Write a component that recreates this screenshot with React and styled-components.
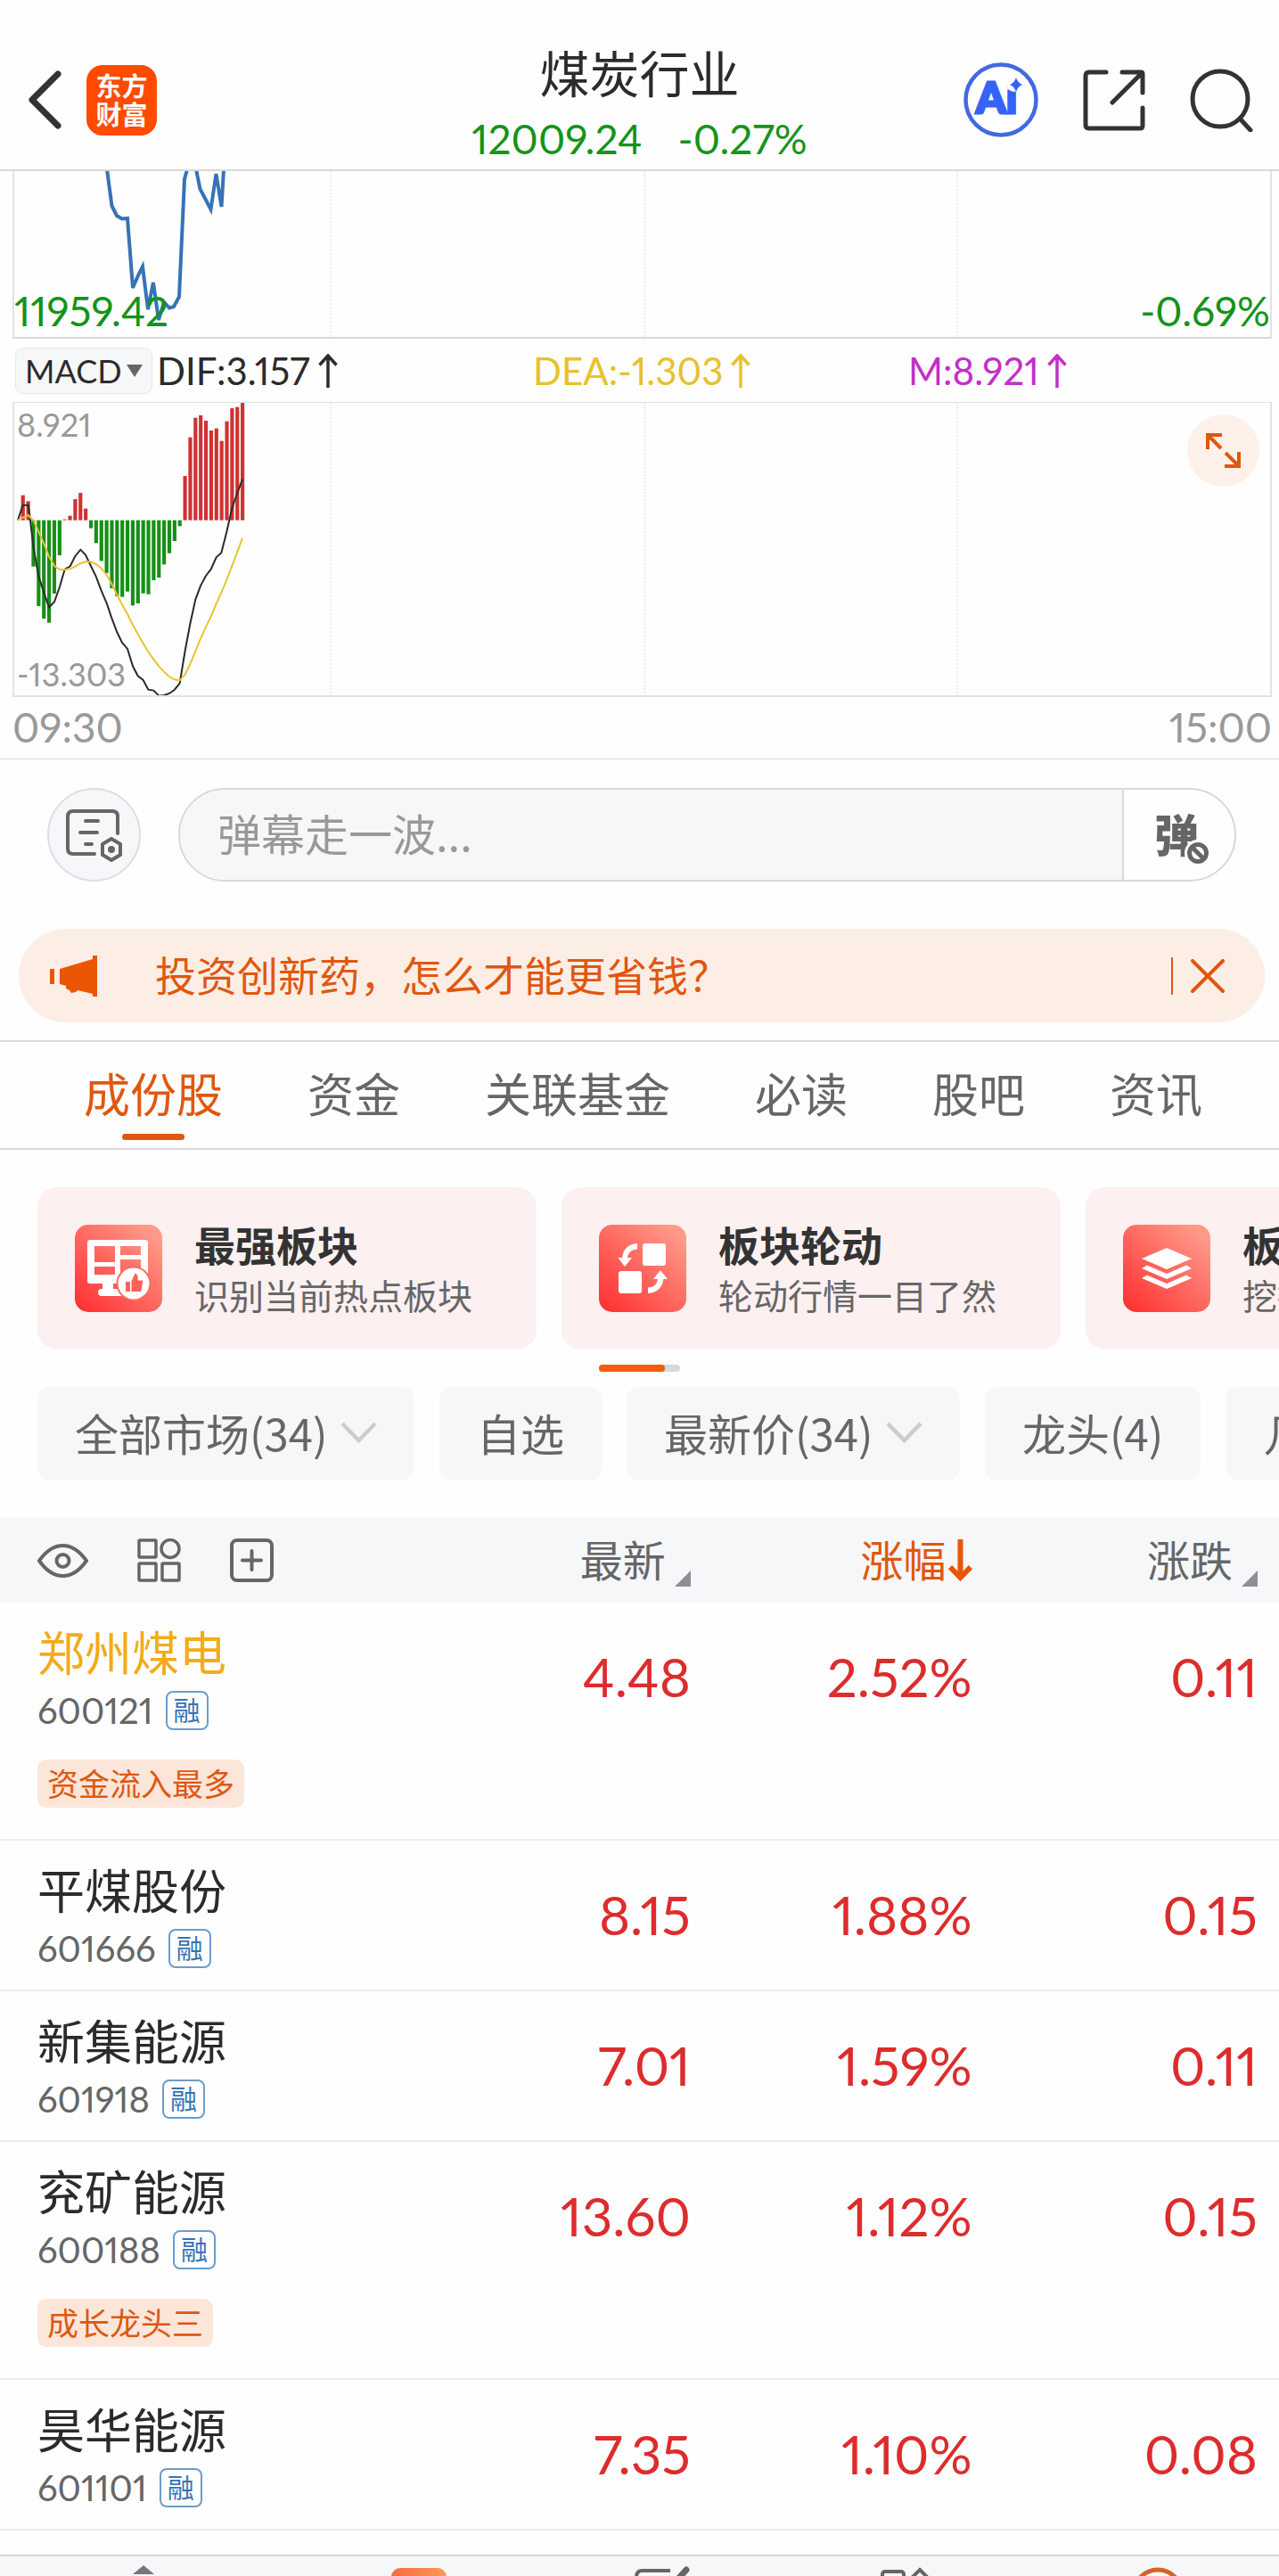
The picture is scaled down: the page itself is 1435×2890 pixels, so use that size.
import React from "react";
import styled, { createGlobalStyle } from "styled-components";

const cjk = '"Noto Sans CJK SC", sans-serif';
const sans = `Lato, ${cjk}`;

const c = {
  ink: "#2b2b2b",
  gray: "#666666",
  light: "#999999",
  line: "#d6d8db",
  rowLine: "#ececef",
  panel: "#f6f7f9",
  green: "#15931a",
  red: "#dd2c2c",
  orange: "#e0570f",
  blue: "#3673b5",
  yellow: "#e8c12c",
  purple: "#c22fc8",
};

const Global = createGlobalStyle`
  *, *::before, *::after { box-sizing: border-box; }
  body { margin: 0; background: #fefefe; }
  button, input, select { font: inherit; color: inherit; border: 0; background: none; padding: 0; margin: 0; }
  select { appearance: none; outline: 0; }
  svg { display: block; }
`;

const Screen = styled.div`
  height: 100vh;
  overflow: hidden;
  font-family: ${sans};
  color: ${c.ink};
`;

/* Header */
const Header = styled.header`
  display: grid;
  grid-template-columns: 1fr auto 1fr;
  padding: 47px 28px 6px;
  height: 192px;
  border-bottom: 2px solid ${c.line};
`;
const HeaderSide = styled.div`
  display: flex;
  align-items: center;
  justify-content: ${(p) => (p.$end ? "flex-end" : "flex-start")};
  gap: ${(p) => (p.$end ? 50 : 26)}px;
  height: 130px;
`;
const IconButton = styled.button`
  display: flex;
  flex: none;
  align-items: center;
  justify-content: center;
`;
const Logo = styled.div`
  width: 79px;
  height: 79px;
  border-radius: 18px;
  background: #ff4a00;
  color: #fff;
  font: 700 29px/32px ${cjk};
  text-align: center;
  padding: 6px 8px 0;
`;
const Heading = styled.div`
  text-align: center;
`;
const Title = styled.h1`
  margin: 0;
  font: 400 56px/66px ${cjk};
`;
const Quote = styled.div`
  display: flex;
  justify-content: center;
  gap: 40px;
  margin-top: 15px;
  font-size: 46px;
  line-height: 56px;
  font-variant-numeric: proportional-nums;
  color: ${c.green};
`;

/* Charts */
const Charts = styled.section`
  padding: 0 8px 0 14px;
  border-bottom: 1px solid ${c.line};
  font-variant-numeric: proportional-nums;
`;
const PricePanel = styled.div`
  position: relative;
  height: 188px;
  border: 2px solid #e2e2e4;
  border-top: 0;
  border-bottom-color: ${c.line};
`;
const MacdPanel = styled.div`
  position: relative;
  height: 331px;
  border: 2px solid #e2e2e4;
  border-top-width: 1px;
`;
const PanelSvg = styled.svg`
  width: 100%;
  height: 100%;
`;
const PanelLabel = styled.span`
  position: absolute;
  ${(p) => (p.$right ? "right: 0" : `left: ${p.$small ? 3 : 0}px`)};
  ${(p) => (p.$top ? "top: 4px" : "bottom: 4px")};
  font-size: ${(p) => (p.$small ? 36 : 46)}px;
  line-height: ${(p) => (p.$small ? 40 : 50)}px;
  color: ${(p) => (p.$small ? c.light : c.green)};
`;
const Expand = styled.button`
  position: absolute;
  top: 13px;
  right: 12px;
  width: 81px;
  height: 81px;
  border-radius: 50%;
  background: #fdf1ea;
`;
const Indicators = styled.div`
  display: grid;
  grid-template-columns: 584px 421px 1fr;
  align-items: center;
  height: 71px;
  font-size: 42px;
  line-height: 50px;
`;
const Indicator = styled.div`
  display: flex;
  align-items: center;
  gap: 9px;
  color: ${(p) => p.$color};
`;
const MacdField = styled.label`
  display: flex;
  align-items: center;
  justify-content: space-between;
  width: 154px;
  height: 52px;
  margin: 0 -4px 0 3px;
  padding: 0 10px;
  border: 1px solid #e4e6e9;
  border-radius: 9px;
  background: ${c.panel};
  font-size: 36px;
`;
const Times = styled.div`
  display: flex;
  justify-content: space-between;
  padding: 4px 0 5px;
  font-size: 46px;
  line-height: 60px;
  color: ${c.light};
`;

/* Comment bar */
const CommentBar = styled.form`
  display: flex;
  gap: 42px;
  padding: 32px 48px 0 53px;
`;
const RoundButton = styled(IconButton)`
  width: 105px;
  height: 105px;
  border: 2px solid #dcdee3;
  border-radius: 50%;
  background: ${c.panel};
`;
const CommentField = styled.div`
  display: flex;
  flex: 1;
  height: 105px;
  border: 2px solid ${c.line};
  border-radius: 53px;
  overflow: hidden;
`;
const CommentInput = styled.input`
  flex: 1;
  min-width: 0;
  padding: 0 0 6px 42px;
  background: ${c.panel};
  font: 400 49px/60px ${cjk};
  outline: 0;
  &::placeholder { color: ${c.light}; opacity: 1; }
`;
const BarrageButton = styled(IconButton)`
  position: relative;
  width: 126px;
  border-left: 2px solid ${c.line};
  padding: 0 6px 6px 0;
  color: ${c.gray};
  font: 900 50px/60px ${cjk};
  svg { position: absolute; left: 68px; top: 56px; }
`;

/* Notice */
const Notice = styled.div`
  display: flex;
  align-items: center;
  height: 105px;
  margin: 53px 16px 20px 21px;
  padding: 0 45px 0 35px;
  border-radius: 53px;
  background: #fceee5;
  color: ${c.orange};
`;
const NoticeLink = styled.a`
  flex: 1;
  margin-left: 64px;
  padding-bottom: 6px;
  color: inherit;
  text-decoration: none;
  font: 400 46px/60px ${cjk};
`;
const CloseButton = styled(IconButton)`
  padding-left: 20px;
  border-left: 2px solid ${c.orange};
  height: 42px;
`;

/* Tabs */
const Tabs = styled.nav`
  display: flex;
  gap: 95px;
  height: 123px;
  padding-left: 94px;
  border-top: 2px solid ${c.line};
  border-bottom: 2px solid ${c.line};
`;
const Tab = styled.a`
  display: flex;
  flex-direction: column;
  align-items: center;
  flex: none;
  color: ${(p) => (p.$active ? c.orange : c.gray)};
  text-decoration: none;
  font: 400 52px/66px ${cjk};
  padding-top: 24px;
  &::after {
    content: "";
    width: 70px;
    height: 7px;
    margin-top: 13px;
    border-radius: 4px;
    background: ${(p) => (p.$active ? c.orange : "transparent")};
  }
`;

/* Cards */
const Cards = styled.div`
  display: flex;
  gap: 28px;
  padding: 42px 0 0 42px;
  overflow: hidden;
`;
const Card = styled.a`
  display: flex;
  flex: none;
  align-items: center;
  gap: 36px;
  width: 560px;
  height: 182px;
  padding-left: 42px;
  border-radius: 22px;
  background: #fcf0f0;
  color: inherit;
  text-decoration: none;
`;
const CardTitle = styled.div`
  font: 700 46px/58px ${cjk};
  color: #333;
`;
const CardText = styled.div`
  font: 400 39px/56px ${cjk};
  color: ${c.gray};
`;
const Pager = styled.div`
  width: 91px;
  height: 8px;
  margin: 17px auto;
  border-radius: 4px;
  background: #d5d8df;
  &::before {
    content: "";
    display: block;
    width: 74px;
    height: 8px;
    border-radius: 4px;
    background: #f65a0c;
  }
`;

/* Filters */
const Filters = styled.div`
  display: flex;
  gap: 28px;
  padding: 0 0 42px 42px;
  overflow: hidden;
`;
const Chip = styled.button`
  display: flex;
  flex: none;
  align-items: center;
  gap: 14px;
  height: 105px;
  padding: 0 42px 4px;
  border-radius: 14px;
  background: ${c.panel};
  color: ${c.gray};
  font: 400 49px/60px ${cjk};
  white-space: nowrap;
`;

/* Stock table */
const Table = styled.table`
  width: 100%;
  table-layout: fixed;
  border-collapse: collapse;
`;
const Th = styled.th`
  width: ${(p) => p.$width};
  height: 95px;
  padding: 0 ${(p) => (p.$last ? 24 : 0)}px 0 ${(p) => (p.$first ? 42 : 0)}px;
  background: ${c.panel};
`;
const Tools = styled.div`
  display: flex;
  align-items: center;
  gap: 55px;
`;
const Sort = styled.button`
  display: flex;
  align-items: center;
  gap: ${(p) => (p.$active ? 2 : 10)}px;
  margin-left: auto;
  color: ${(p) => (p.$active ? c.orange : c.gray)};
  font: 400 48px/60px ${cjk};
  white-space: nowrap;
`;
const SortLabel = styled.span`
  padding-bottom: 6px;
`;
const Corner = styled.svg`
  align-self: flex-end;
  margin-bottom: 4px;
`;
const Row = styled.tr`
  border-bottom: 2px solid ${c.rowLine};
`;
const NameCell = styled.td`
  padding: 23px 0 24px 42px;
`;
const StockName = styled.div`
  font: 400 53px/62px ${cjk};
  color: ${(p) => (p.$marked ? "#f3ab1b" : c.ink)};
`;
const Code = styled.div`
  display: flex;
  align-items: center;
  gap: 14px;
  margin-top: 14px;
  font-size: 40px;
  line-height: 44px;
  font-variant-numeric: proportional-nums;
  color: ${c.gray};
`;
const Badge = styled.span`
  width: 48px;
  height: 44px;
  border: 2px solid #6d9cc9;
  border-radius: 8px;
  color: ${c.blue};
  font: 400 30px/37px ${cjk};
  text-align: center;
`;
const Tag = styled.span`
  display: block;
  width: max-content;
  margin: 33px 0 11px;
  padding: 0 11px 2px;
  border-radius: 10px;
  background: #fce6da;
  color: ${c.orange};
  font: 400 35px/52px ${cjk};
`;
const Value = styled.td`
  padding: 0 ${(p) => (p.$last ? 24 : 0)}px 0 0;
  vertical-align: top;
  text-align: right;
  font-size: 60px;
  line-height: 167px;
  font-variant-numeric: proportional-nums;
  color: ${c.red};
`;

/* Bottom bar */
const BottomBar = styled.nav`
  display: grid;
  grid-template-columns: 322px 296px 250px 1fr 272px;
  margin-top: 27px;
  padding-top: 10px;
  height: 120px;
  border-top: 2px solid ${c.line};
  background: ${c.panel};
`;
const BarItem = styled.a`
  display: flex;
  justify-content: center;
  align-items: flex-start;
`;

const bars = [
  557, 577, 797, 930, 972, 986, 888, 759, 638, 626, 570, 549, 602, 668, 718,
  778, 819, 870, 897, 899, 881, 928, 921, 887, 890, 843, 834, 790, 752, 711,
  661, 492, 362, 296, 288, 306, 339, 332, 374, 308, 264, 260, 246,
];
const dif =
  "60,641 77,590 95,590 100,625 113,735 130,830 148,885 165,934 183,916 201,865 218,806 236,796 253,762 271,740 288,758 306,795 323,830 341,878 359,920 376,970 394,1018 411,1053 429,1074 447,1132 464,1165 482,1179 499,1211 517,1214 535,1232 552,1230 570,1224 587,1212 605,1190 623,1080 640,990 658,908 675,862 693,828 710,806 728,766 745,751 763,680 781,600 798,552 816,503";
const dea =
  "60,641 77,632 95,624 113,642 130,680 148,720 165,763 183,795 201,807 218,807 236,805 253,797 271,786 288,780 306,781 323,789 341,803 359,825 376,855 394,892 411,925 429,957 447,993 464,1024 482,1055 499,1084 517,1109 535,1133 552,1151 570,1168 587,1177 605,1180 623,1160 640,1125 658,1082 675,1040 693,1000 710,965 728,922 745,885 763,842 781,795 798,750 816,701";

const GridLines = () =>
  ["25.2%", "50.2%", "75.1%"].map((x) => (
    <line key={x} x1={x} x2={x} y1="0" y2="100%" stroke="#dadada" strokeDasharray="2 2" />
  ));

const UpArrow = () => (
  <svg width="22" height="38" viewBox="0 0 22 38" fill="none" stroke="currentColor" strokeWidth="3.500">
    <path d="M11 38V2M1.500 12.500 11 2l9.500 10.500" />
  </svg>
);

const Chevron = () => (
  <svg width="41" height="24" viewBox="0 0 41 24" fill="none" stroke="#cccccc" strokeWidth="4.500">
    <path d="M2 2l18.500 19L39 2" />
  </svg>
);

const CardIcon = ({ id, children }) => (
  <svg width="98" height="98" viewBox="0 0 98 98">
    <defs>
      <linearGradient id={id} x1="0.1" y1="0.95" x2="0.9" y2="0.1">
        <stop offset="0" stopColor="#ff3535" />
        <stop offset="1" stopColor="#ff9a8a" />
      </linearGradient>
    </defs>
    <rect width="98" height="98" rx="15" fill={`url(#${id})`} />
    {children}
  </svg>
);

const StrongIcon = () => (
  <CardIcon id="g1">
    <path fill="#fff" fillRule="evenodd" d="M17 17h62q3 0 3 3v43q0 3-3 3H17q-3 0-3-3V20q0-3 3-3zM22 24v18h23V24zM51 24v10h23V24zM22 47v9h23v-9zM51 39v17h23V39z" />
    <path fill="#fff" d="M31 62h12v10h18v8H30q-4 0-4-4t4-4h1z" />
    <circle cx="66" cy="66" r="19.500" fill="#ff6a62" />
    <circle cx="66" cy="66" r="17.500" fill="#fff" />
    <path fill="#ff6158" d="M57 64h5v11h-5zM63.500 63.500l4-9q4 1 3 8h5.500v3l-2 9.500H63.500z" />
  </CardIcon>
);
const RotateIcon = () => (
  <CardIcon id="g2">
    <g fill="#fff">
      <rect x="49" y="21" width="26" height="25" rx="3" />
      <rect x="22" y="52" width="26" height="25" rx="3" />
      <path d="M21.500 37h4.500Q28 22 43 21v6.500Q33 28 32 37h5L29 47z" />
      <path d="M77 61h-4.500Q70 76 55 77v-6.500Q65 70 66 61h-5l8-10z" />
    </g>
  </CardIcon>
);
const LayersIcon = () => (
  <CardIcon id="g3">
    <g fill="#fff">
      <path d="M49 26 77 38 49 50 21 38z" />
      <path d="M27 45.500 49 55l22-9.500 6 3.500L49 61 21 49z" />
      <path d="M27 56.500 49 66l22-9.500 6 3.500L49 72 21 60z" />
    </g>
  </CardIcon>
);

const cards = [
  { title: "最强板块", text: "识别当前热点板块", Icon: StrongIcon },
  { title: "板块轮动", text: "轮动行情一目了然", Icon: RotateIcon },
  { title: "板块挖掘", text: "挖掘板块机会", Icon: LayersIcon },
];
const filters = [
  { label: "全部市场(34)", name: "市场" },
  { label: "自选" },
  { label: "最新价(34)", name: "价格" },
  { label: "龙头(4)" },
  { label: "几天几板" },
];
const stocks = [
  { name: "郑州煤电", code: "600121", tag: "资金流入最多", marked: true, v: ["4.48", "2.52%", "0.11"] },
  { name: "平煤股份", code: "601666", v: ["8.15", "1.88%", "0.15"] },
  { name: "新集能源", code: "601918", v: ["7.01", "1.59%", "0.11"] },
  { name: "兖矿能源", code: "600188", tag: "成长龙头三", v: ["13.60", "1.12%", "0.15"] },
  { name: "昊华能源", code: "601101", v: ["7.35", "1.10%", "0.08"] },
];

const SortMark = () => (
  <Corner width="18" height="18" viewBox="0 0 18 18">
    <path d="M18 0v18H0z" fill="#8e8e93" />
  </Corner>
);

export default function App() {
  return (
    <Screen>
      <Global />
      <Header>
        <HeaderSide>
          <IconButton aria-label="返回">
            <svg width="43" height="68" viewBox="0 0 43 68" fill="none" stroke="#333" strokeWidth="7" strokeLinecap="round" strokeLinejoin="round">
              <path d="M37 5 8 34l29 29" />
            </svg>
          </IconButton>
          <Logo>东方 财富</Logo>
        </HeaderSide>
        <Heading>
          <Title>煤炭行业</Title>
          <Quote>
            <span>12009.24</span>
            <span>-0.27%</span>
          </Quote>
        </Heading>
        <HeaderSide $end>
          <IconButton aria-label="Ai">
            <svg width="84" height="84" viewBox="0 0 84 84">
              <circle cx="42" cy="42" r="39.500" fill="#fff" stroke="#4169e1" strokeWidth="4.500" />
              <text x="14" y="57" fontFamily="Lato, sans-serif" fontWeight="900" fontSize="48" fill="#3563f5" stroke="#3563f5" strokeWidth="3">Ai</text>
              <circle cx="57" cy="24" r="9" fill="#fff" />
              <path d="M59 17q2 6 7 8-5 2-7 8-2-6-7-8 5-2 7-8z" fill="#3563f5" />
            </svg>
          </IconButton>
          <IconButton aria-label="分享">
            <svg width="70" height="70" viewBox="0 0 70 70" fill="none" stroke="#333" strokeWidth="5" strokeLinecap="round" strokeLinejoin="round">
              <path d="M26 4H7q-4 0-4 4v55q0 4 4 4h57q3 0 3-3V44M44 4h21q2 0 2 2v21M66 5 33 38" />
            </svg>
          </IconButton>
          <IconButton aria-label="搜索">
            <svg width="72" height="72" viewBox="0 0 72 72" fill="none" stroke="#333" strokeWidth="5" strokeLinecap="round">
              <circle cx="34" cy="35" r="31" />
              <path d="M56 57l12 13" />
            </svg>
          </IconButton>
        </HeaderSide>
      </Header>

      <Charts>
        <PricePanel>
          <PanelSvg>
            <GridLines />
            <g transform="translate(-16 -192)" fill="none" stroke={c.blue} strokeWidth="4">
              <polyline points="120,190 125.500,231 131,242 137,245.500 143,245 149,323 155,309 160,299 166,347 172,317 178,359 184,339 190,345.500 195,344 201,333 207,201 210,190" />
              <polyline points="220,190 224.500,212 236.500,235 242.500,195 248.500,232 251,190" />
            </g>
          </PanelSvg>
          <PanelLabel>11959.42</PanelLabel>
          <PanelLabel $right>-0.69%</PanelLabel>
        </PricePanel>
        <Indicators>
          <Indicator $color={c.ink}>
            <MacdField>
              <select aria-label="指标">
                <option>MACD</option>
              </select>
              <svg width="18" height="14" viewBox="0 0 18 14"><path d="M0 0h18L9 14z" fill="#666" /></svg>
            </MacdField>
            <span>DIF:3.157</span>
            <UpArrow />
          </Indicator>
          <Indicator $color={c.yellow}>
            <span>DEA:-1.303</span>
            <UpArrow />
          </Indicator>
          <Indicator $color={c.purple}>
            <span>M:8.921</span>
            <UpArrow />
          </Indicator>
        </Indicators>
        <MacdPanel>
          <PanelSvg>
            <GridLines />
            <g transform="translate(-16 -82) scale(0.3333)">
              {bars.map((y, i) => (
                <rect key={i} x={71 + i * 17.6} width="12.500" y={Math.min(y, 641)} height={Math.abs(641 - y)} fill={y < 641 ? "#cf3232" : "#169016"} />
              ))}
              <polyline points={dif} fill="none" stroke="#2b2b2b" strokeWidth="6" />
              <polyline points={dea} fill="none" stroke="#e6c52e" strokeWidth="6" />
            </g>
          </PanelSvg>
          <PanelLabel $small $top>8.921</PanelLabel>
          <PanelLabel $small>-13.303</PanelLabel>
          <Expand aria-label="全屏">
            <svg width="81" height="81" viewBox="0 0 81 81" fill="none" stroke={c.orange} strokeWidth="4">
              <path d="M39 23H23v16M23 23l15 15M42 58h16V42M58 58 43 43" />
            </svg>
          </Expand>
        </MacdPanel>
        <Times>
          <span>09:30</span>
          <span>15:00</span>
        </Times>
      </Charts>

      <CommentBar>
        <RoundButton type="button" aria-label="弹幕设置">
          <svg width="66" height="60" viewBox="0 0 66 60" fill="none" stroke="#666" strokeWidth="4" strokeLinecap="round" strokeLinejoin="round">
            <path d="M33 51H9q-6 0-6-6V9q0-6 6-6h44q6 0 6 6v19M23 14h14M17 27h19M23 40h7" />
            <path d="M52 34l10 6v12l-10 6-10-6V40z" />
            <circle cx="52" cy="46" r="2" fill="#666" />
          </svg>
        </RoundButton>
        <CommentField>
          <CommentInput aria-label="弹幕" placeholder="弹幕走一波..." />
          <BarrageButton type="button" aria-label="关闭弹幕">
            弹
            <svg width="32" height="32" viewBox="0 0 32 32" fill="none" stroke="#666" strokeWidth="5">
              <circle cx="15" cy="15" r="14" stroke="#fefefe" fill="#fefefe" strokeWidth="2" />
              <circle cx="15" cy="15" r="9.500" />
              <path d="M9 9l12 12" />
            </svg>
          </BarrageButton>
        </CommentField>
      </CommentBar>

      <Notice>
        <svg width="54" height="46" viewBox="0 0 54 46" fill="#ea5504">
          <path d="M0 15h5v17H0zM11 15 48 4V0h5v46h-5v-3l-17-4-2 2-5 1-2-3-4-2v-3l-7-2z" />
        </svg>
        <NoticeLink href="#notice">投资创新药，怎么才能更省钱？</NoticeLink>
        <CloseButton aria-label="关闭">
          <svg width="38" height="38" viewBox="0 0 38 38" fill="none" stroke={c.orange} strokeWidth="4" strokeLinecap="round">
            <path d="M2 2l34 34M36 2 2 36" />
          </svg>
        </CloseButton>
      </Notice>

      <Tabs>
        {["成份股", "资金", "关联基金", "必读", "股吧", "资讯"].map((t, i) => (
          <Tab key={t} href={`#tab${i}`} $active={i === 0}>{t}</Tab>
        ))}
      </Tabs>

      <Cards>
        {cards.map(({ title, text, Icon }) => (
          <Card key={title} href="#card">
            <Icon />
            <div>
              <CardTitle>{title}</CardTitle>
              <CardText>{text}</CardText>
            </div>
          </Card>
        ))}
      </Cards>
      <Pager />

      <Filters>
        {filters.map((f) =>
          f.name ? (
            <Chip as="label" key={f.label}>
              <select aria-label={f.name}>
                <option>{f.label}</option>
              </select>
              <Chevron />
            </Chip>
          ) : (
            <Chip key={f.label}>{f.label}</Chip>
          )
        )}
      </Filters>

      <Table>
        <thead>
          <tr>
            <Th $width="32%" $first>
              <Tools>
                <IconButton aria-label="显示">
                  <svg width="57" height="38" viewBox="0 0 57 38" fill="none" stroke="#666" strokeWidth="4">
                    <path d="M2 19Q14 2 28.500 2T55 19Q43 36 28.500 36T2 19z" />
                    <circle cx="28.500" cy="19" r="7" />
                  </svg>
                </IconButton>
                <IconButton aria-label="布局">
                  <svg width="49" height="49" viewBox="0 0 49 49" fill="none" stroke="#666" strokeWidth="3.500">
                    <rect x="2" y="2" width="19" height="19" rx="1" />
                    <circle cx="37" cy="11.500" r="10" />
                    <rect x="2" y="28" width="19" height="19" rx="1" />
                    <rect x="28" y="28" width="19" height="19" rx="1" />
                  </svg>
                </IconButton>
                <IconButton aria-label="添加">
                  <svg width="49" height="49" viewBox="0 0 49 49" fill="none" stroke="#666" strokeWidth="4" strokeLinecap="round">
                    <rect x="2" y="2" width="45" height="45" rx="6" />
                    <path d="M14 24.500h21M24.500 14v21" />
                  </svg>
                </IconButton>
              </Tools>
            </Th>
            <Th $width="22%"><Sort><SortLabel>最新</SortLabel><SortMark /></Sort></Th>
            <Th $width="22%">
              <Sort $active>
                <SortLabel>涨幅</SortLabel>
                <svg width="27" height="48" viewBox="0 0 27 48" fill="none" stroke="#ea5504" strokeWidth="6">
                  <path d="M13.500 0v43M2 31l11.500 12L25 31" />
                </svg>
              </Sort>
            </Th>
            <Th $width="24%" $last><Sort><SortLabel>涨跌</SortLabel><SortMark /></Sort></Th>
          </tr>
        </thead>
        <tbody>
          {stocks.map((s) => (
            <Row key={s.code}>
              <NameCell>
                <StockName $marked={s.marked}>{s.name}</StockName>
                <Code>{s.code}<Badge>融</Badge></Code>
                {s.tag && <Tag>{s.tag}</Tag>}
              </NameCell>
              {s.v.map((v, i) => (
                <Value key={i} $last={i === 2}>{v}</Value>
              ))}
            </Row>
          ))}
        </tbody>
      </Table>

      <BottomBar>
        <BarItem href="#up" aria-label="展开">
          <svg width="24" height="12" viewBox="0 0 24 12"><path d="M12 0 24 10H0z" fill="#77777b" /></svg>
        </BarItem>
        <BarItem href="#trade" aria-label="交易">
          <svg width="64" height="64" viewBox="0 0 64 64">
            <defs>
              <linearGradient id="nav" x1="0" x2="1"><stop stopColor="#f66b40" /><stop offset="1" stopColor="#fb9a58" /></linearGradient>
            </defs>
            <rect x="1" y="3" width="62" height="60" rx="10" fill="url(#nav)" />
          </svg>
        </BarItem>
        <BarItem href="#note" aria-label="笔记">
          <svg width="66" height="62" viewBox="0 0 66 62" fill="none" stroke="#666" strokeWidth="4">
            <path d="M42 6H10Q4 6 4 14v40h50V30" />
            <path d="M60 5 34 34" strokeWidth="7" strokeLinecap="round" />
          </svg>
        </BarItem>
        <BarItem href="#apps" aria-label="应用">
          <svg width="60" height="60" viewBox="0 0 60 60" fill="none" stroke="#666" strokeWidth="4">
            <rect x="4" y="7" width="24" height="20" rx="3" />
            <path d="M46 5l12 12-12 12-12-12z" />
          </svg>
        </BarItem>
        <BarItem href="#me" aria-label="我的">
          <svg width="60" height="60" viewBox="0 0 60 60" fill="none" stroke="#d2632b" strokeWidth="5">
            <circle cx="30" cy="32" r="27" />
          </svg>
        </BarItem>
      </BottomBar>
    </Screen>
  );
}
